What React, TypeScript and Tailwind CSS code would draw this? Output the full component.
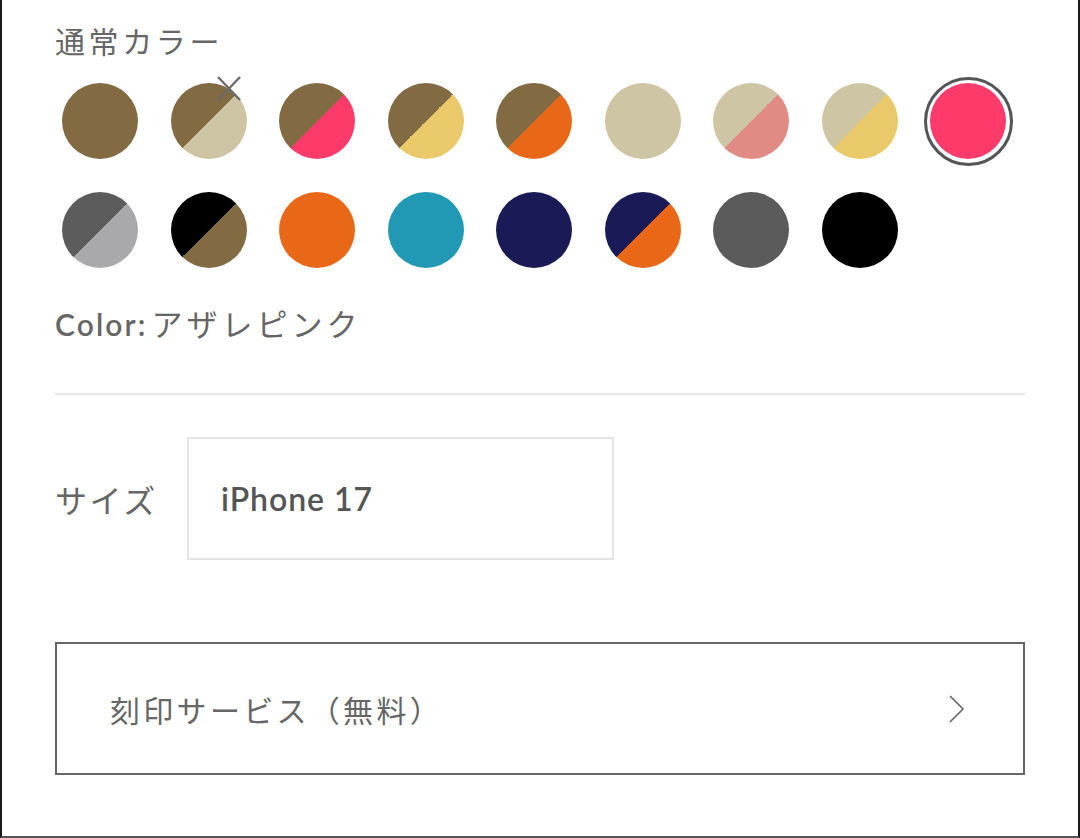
import React from "react";

const jp = "font-['Noto_Sans_CJK_JP','Noto_Sans',sans-serif]";
const geo = "font-['Lato','Noto_Sans_CJK_JP',sans-serif]";

type Swatch = { bg: string; selected?: boolean; cross?: boolean };

const row1: Swatch[] = [
  { bg: "bg-[#826b42]" },
  { bg: "bg-[linear-gradient(135deg,#826b42_50%,#cdc4a4_50%)]", cross: true },
  { bg: "bg-[linear-gradient(135deg,#826b42_50%,#fc3b6b_50%)]" },
  { bg: "bg-[linear-gradient(135deg,#826b42_50%,#e9c96a_50%)]" },
  { bg: "bg-[linear-gradient(135deg,#826b42_50%,#e96818_50%)]" },
  { bg: "bg-[#cec5a5]" },
  { bg: "bg-[linear-gradient(135deg,#cec5a5_50%,#e08c84_50%)]" },
  { bg: "bg-[linear-gradient(135deg,#cec5a5_50%,#e9c96a_50%)]" },
  { bg: "bg-[#fc3b6b]", selected: true },
];

const row2: Swatch[] = [
  { bg: "bg-[linear-gradient(135deg,#5c5c5c_50%,#a9a9ab_50%)]" },
  { bg: "bg-[linear-gradient(135deg,#000000_50%,#826b42_50%)]" },
  { bg: "bg-[#e96818]" },
  { bg: "bg-[#2198b4]" },
  { bg: "bg-[#1a1a56]" },
  { bg: "bg-[linear-gradient(135deg,#1a1a56_50%,#e96818_50%)]" },
  { bg: "bg-[#5b5b5b]" },
  { bg: "bg-[#000000]" },
];

function Cell({ s }: { s: Swatch }) {
  return (
    <div className="relative w-[90px] h-[90px] flex items-center justify-center">
      {s.selected ? (
        <div className="w-[89px] h-[89px] rounded-full border-[3px] border-[#555555] flex items-center justify-center">
          <div className={`w-[76px] h-[76px] rounded-full ${s.bg}`} />
        </div>
      ) : (
        <div className={`w-[76px] h-[76px] rounded-full ${s.bg}`} />
      )}
      {s.cross && (
        <svg
          className="absolute left-[52px] top-0 w-[26px] h-[26px]"
          viewBox="0 0 26 26"
          fill="none"
          stroke="#6b6b6b"
          strokeWidth="2.4"
        >
          <line x1="2" y1="1" x2="24" y2="24" />
          <line x1="24" y1="1" x2="2" y2="24" />
        </svg>
      )}
    </div>
  );
}

export default function App() {
  return (
    <div className="w-[1080px] h-[838px] bg-white border-l-2 border-r-2 border-b-2 border-l-[#1a1a1a] border-r-[#1a1a1a] border-b-[#555555] px-[53px] overflow-hidden">
      <div className={`${jp} h-[42px] text-[30px] leading-[42px] tracking-[0.12em] text-[#666666] mt-[19px]`}>
        通常カラー
      </div>
      <div className="mt-[15px] flex flex-col gap-y-[19px]">
        <div className="flex gap-x-[18.5px]">
          {row1.map((s, i) => (
            <Cell key={i} s={s} />
          ))}
        </div>
        <div className="flex gap-x-[18.5px]">
          {row2.map((s, i) => (
            <Cell key={i} s={s} />
          ))}
        </div>
      </div>
      <div className="mt-[27px] h-[42px] flex items-baseline text-[#666666] leading-[42px]">
        <span className={`${geo} text-[30px] font-semibold tracking-[0.07em]`}>Color:</span>
        <span className={`${jp} text-[31px] tracking-[0.13em] ml-[4px]`}>アザレピンク</span>
      </div>
      <div className="mt-[49px] h-[2px] bg-[#e6e6ee]" />
      <div className="mt-[42px] flex items-center">
        <div className={`${jp} w-[132px] text-[32px] tracking-[0.08em] text-[#666666] leading-[42px]`}>
          サイズ
        </div>
        <div className="w-[427px] h-[123px] border-2 border-[#e4e4e4] flex items-center pl-[32px]">
          <span className={`${geo} text-[32px] font-semibold text-[#555555] tracking-[0.03em]`}>iPhone 17</span>
        </div>
      </div>
      <div className="mt-[82px] h-[133px] border-2 border-[#666666] flex items-center justify-between pl-[53px] pr-[58px]">
        <span className={`${jp} text-[30px] leading-[42px] tracking-[0.11em] text-[#666666]`}>刻印サービス（無料）</span>
        <svg width="17" height="28" viewBox="0 0 17 28" fill="none" stroke="#666666" strokeWidth="1.6">
          <polyline points="2,1 15,14 2,27" />
        </svg>
      </div>
    </div>
  );
}
